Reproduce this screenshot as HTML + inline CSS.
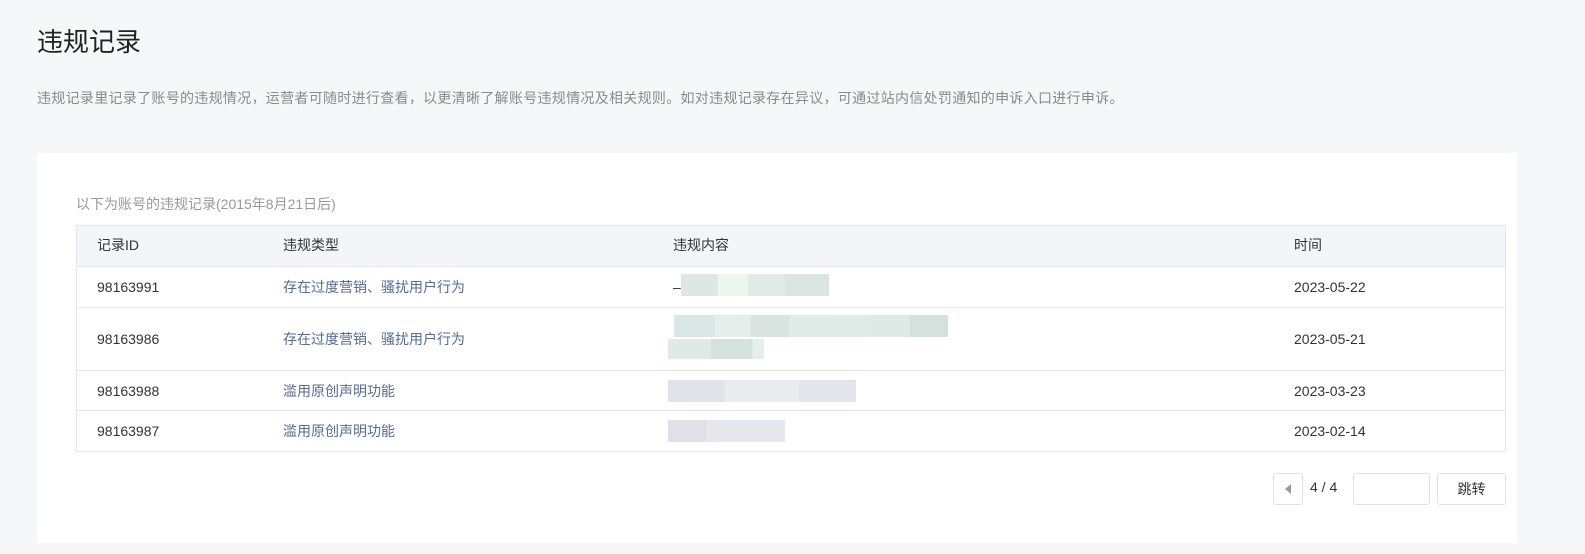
<!DOCTYPE html><html><head><meta charset="utf-8"><style>
body{margin:0;width:1585px;height:554px;background:#f6f7f9;font-family:"Liberation Sans","Noto Sans CJK SC",sans-serif;position:relative;overflow:hidden;color:#333}
.a{position:absolute}
h1{position:absolute;left:37px;top:22px;margin:0;font-size:26px;font-weight:normal;color:#222}
.desc{left:37px;top:88px;font-size:14px;color:#8a8a8a;letter-spacing:0.3px;white-space:nowrap}
.card{left:37px;top:153px;width:1480px;height:390px;background:#fff}
.tb{left:76px;top:225px;width:1428px;height:225px;border:1px solid #e4e6eb}
.row{position:absolute;left:0;width:1428px;border-top:1px solid #e4e6eb;font-size:14px}
.row span{position:absolute}
.t{color:#576b95}
.blur{position:absolute;height:22px}
.btn{position:absolute;border:1px solid #e0e1e6;border-radius:3px;background:#fff}
</style></head><body>
<h1>违规记录</h1>
<div class="a desc">违规记录里记录了账号的违规情况，运营者可随时进行查看，以更清晰了解账号违规情况及相关规则。如对违规记录存在异议，可通过站内信处罚通知的申诉入口进行申诉。</div>
<div class="a card"></div>
<div class="a" style="left:76px;top:194px;font-size:14px;color:#999">以下为账号的违规记录(2015年8月21日后)</div>
<div class="a tb">
<div class="row" style="top:0;height:40px;background:#f4f5f8;border-top:none;line-height:38px"><span style="left:20px">记录ID</span><span style="left:206px">违规类型</span><span style="left:596px">违规内容</span><span style="left:1217px">时间</span></div>
<div class="row" style="top:40px;height:40px;line-height:40px"><span style="left:20px">98163991</span><span class="t" style="left:206px">存在过度营销、骚扰用户行为</span><span style="left:596px">–</span>
<div class="blur" style="left:604px;top:7px;width:148px;background:linear-gradient(90deg,#dde8e5 0 25%,#eef6f1 25% 45%,#e1ece8 45% 70%,#dbe5e2 70%)"></div><span style="left:1217px">2023-05-22</span></div>
<div class="row" style="top:81px;height:62px;line-height:62px"><span style="left:20px">98163986</span><span class="t" style="left:206px">存在过度营销、骚扰用户行为</span>
<div class="blur" style="left:597px;top:7px;width:274px;background:linear-gradient(90deg,#dbe7e4 0 15%,#e4efec 15% 28%,#d9e4e1 28% 42%,#e1ece9 42% 70%,#dfeae7 70% 86%,#d6e1de 86%)"></div>
<div class="blur" style="left:591px;top:31px;width:96px;height:20px;background:linear-gradient(90deg,#dfeae7 0 45%,#d5e1dd 45% 88%,#e5efec 88%)"></div><span style="left:1217px">2023-05-21</span></div>
<div class="row" style="top:144px;height:40px;line-height:40px"><span style="left:20px">98163988</span><span class="t" style="left:206px">滥用原创声明功能</span>
<div class="blur" style="left:591px;top:9px;width:188px;background:linear-gradient(90deg,#e2e3ea 0 30%,#eaebf0 30% 70%,#e4e5ec 70%)"></div><span style="left:1217px">2023-03-23</span></div>
<div class="row" style="top:184px;height:40px;line-height:40px"><span style="left:20px">98163987</span><span class="t" style="left:206px">滥用原创声明功能</span>
<div class="blur" style="left:591px;top:9px;width:117px;background:linear-gradient(90deg,#e0e1e8 0 33%,#e7e8ee 33%)"></div><span style="left:1217px">2023-02-14</span></div>
</div>
<div class="btn" style="left:1273px;top:473px;width:28px;height:30px"><div style="position:absolute;left:11px;top:10px;border-right:6px solid #999;border-top:5px solid transparent;border-bottom:5px solid transparent"></div></div>
<div class="a" style="left:1310px;top:479px;font-size:14px;color:#333">4 / 4</div>
<div class="btn" style="left:1353px;top:473px;width:75px;height:30px"></div>
<div class="btn" style="left:1437px;top:473px;width:67px;height:30px;text-align:center;line-height:30px;font-size:14px;color:#333">跳转</div>
</body></html>
